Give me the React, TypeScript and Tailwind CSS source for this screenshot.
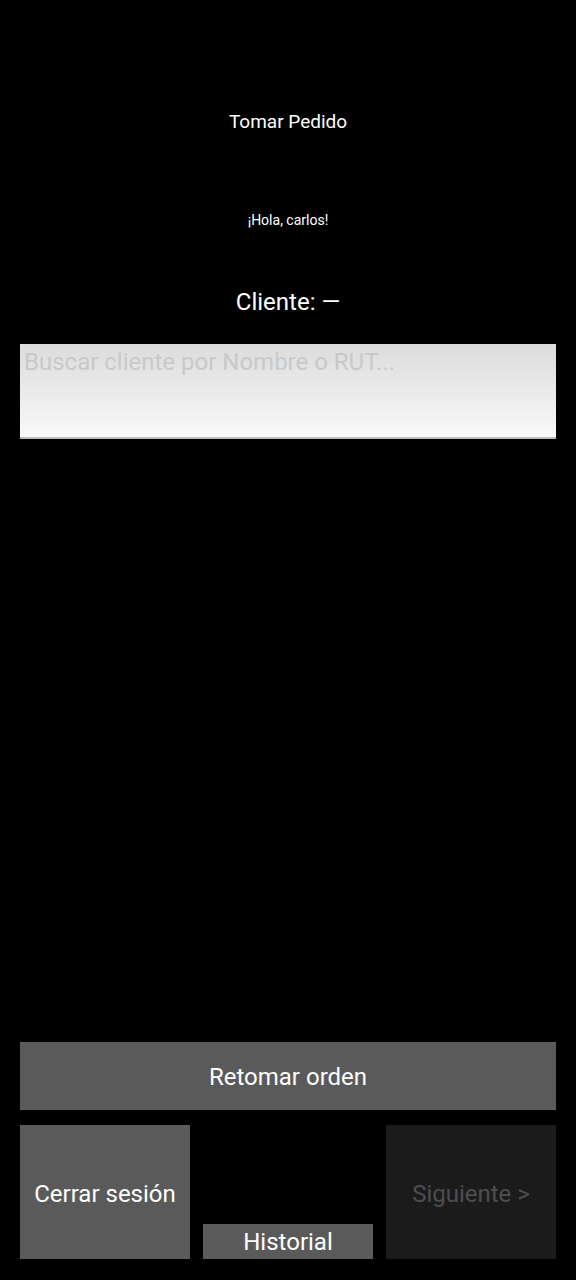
import React from "react";

export default function App() {
  return (
    <div className="flex h-[1280px] w-full flex-col bg-black px-5 pb-[21px] font-['Roboto',sans-serif] text-white">
      {/* Header */}
      <div className="flex h-[242px] flex-col items-center pt-[110px]">
        <div className="text-[19px] leading-6">Tomar Pedido</div>
        <div className="mt-[76px] text-[14px] leading-5">¡Hola, carlos!</div>
      </div>
      <div className="mt-[44px] text-center text-[24px] leading-8">Cliente: —</div>

      {/* Search */}
      <div className="mt-[26px] h-[95px] border-b-2 border-[#bdbdbd] bg-gradient-to-b from-[#dcdcdc] to-[#f9f9f9] px-1 pt-[2px]">
        <div className="text-[24px] leading-8 text-[#c9c9c9]">Buscar cliente por Nombre o RUT...</div>
      </div>

      <div className="flex-1" />

      {/* Actions */}
      <button className="h-[68px] w-full bg-[#5a5a5a] pt-[2px] text-[24px] text-white">Retomar orden</button>
      <div className="mt-[15px] grid h-[134px] grid-cols-3 gap-[13px]">
        <button className="bg-[#5a5a5a] pt-[3px] text-[24px] text-white">Cerrar sesión</button>
        <div className="flex flex-col justify-end">
          <button className="h-[35px] w-full bg-[#5a5a5a] pt-[2px] text-[24px] leading-[33px] text-white">Historial</button>
        </div>
        <button className="bg-[#1b1b1b] pt-[3px] text-[24px] text-[#4e4e4e]">Siguiente &gt;</button>
      </div>
    </div>
  );
}
